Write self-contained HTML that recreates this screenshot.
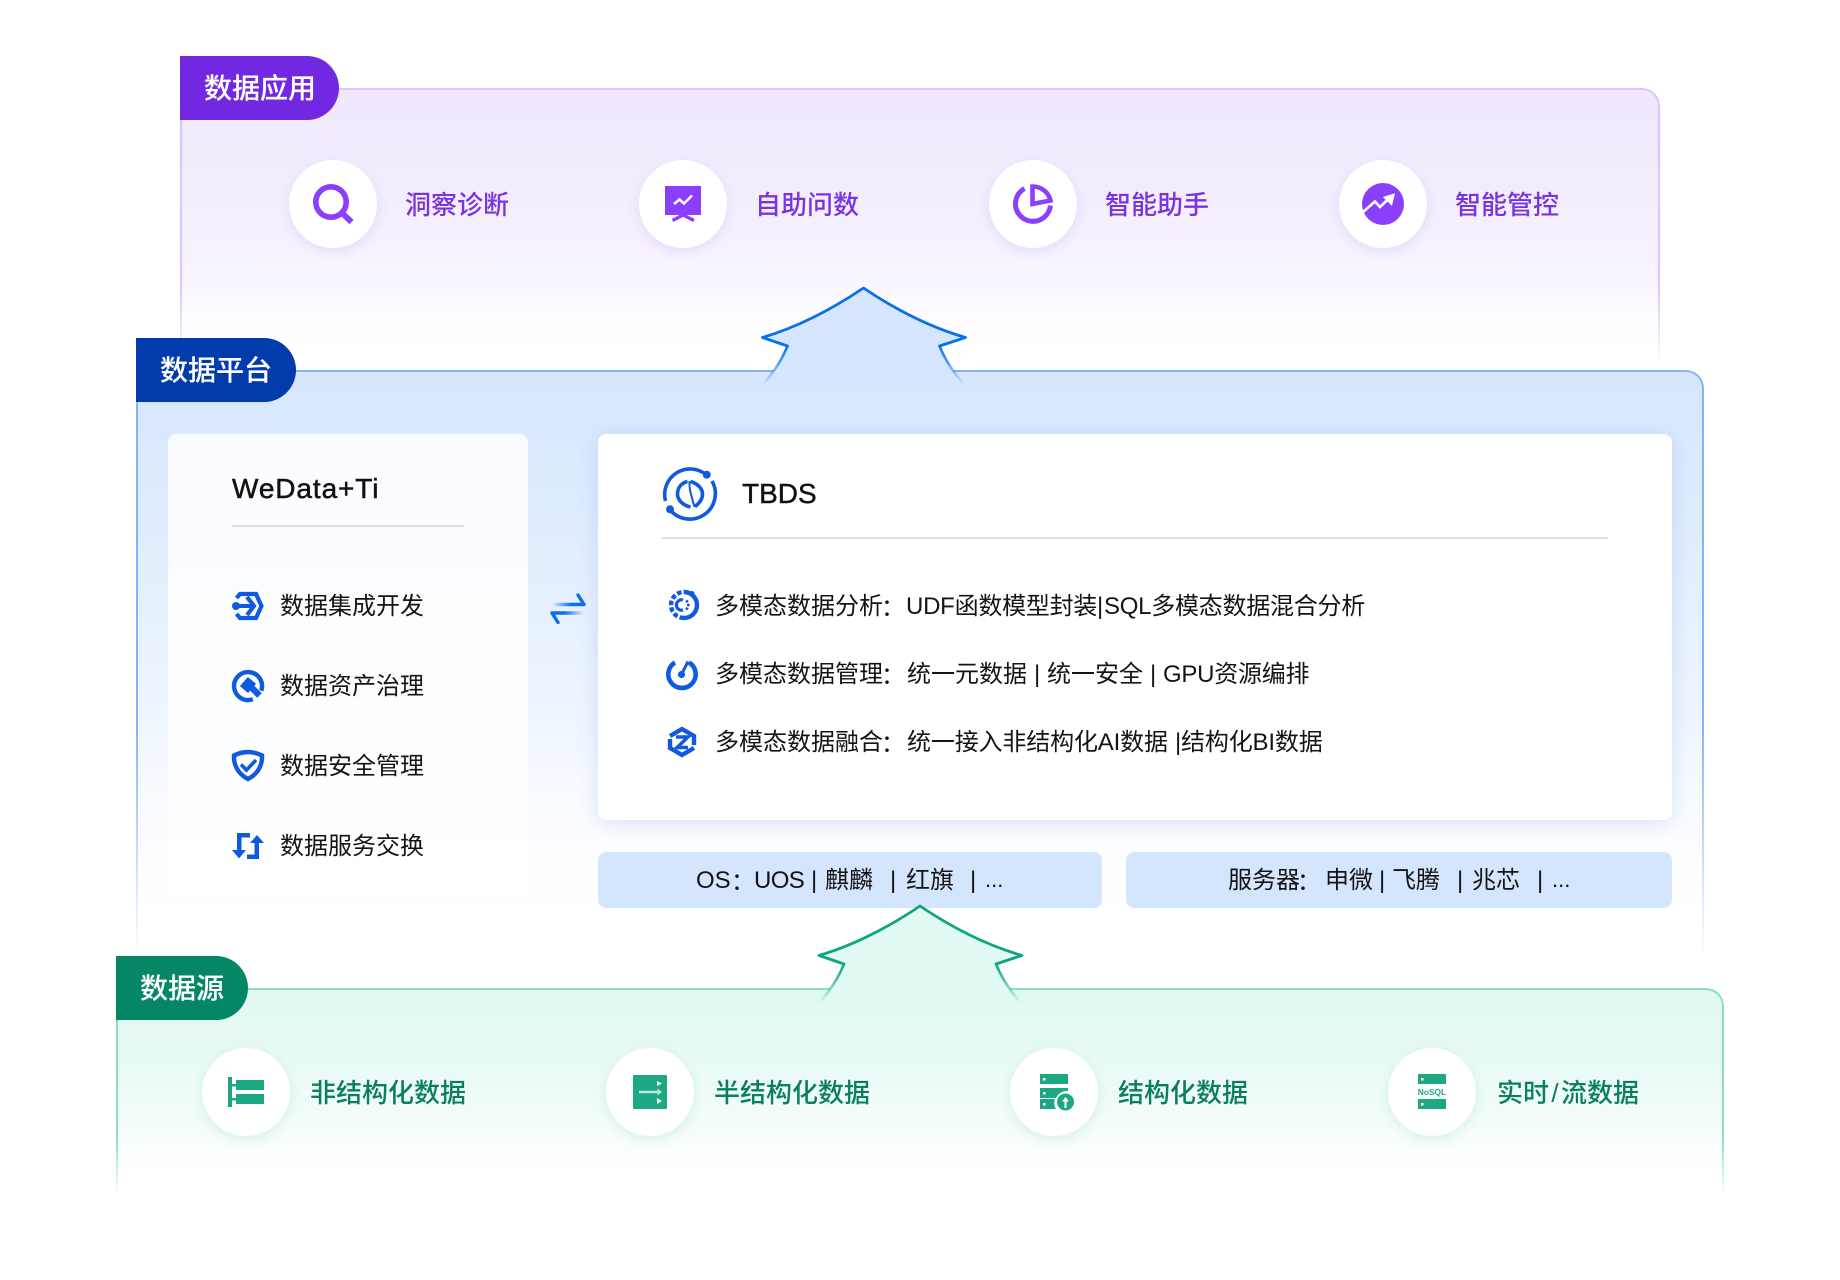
<!DOCTYPE html>
<html lang="zh-CN"><head><meta charset="utf-8"><title>数据架构</title>
<style>
html,body{margin:0;padding:0;background:#fff}
body{position:relative;width:1840px;height:1280px;overflow:hidden;font-family:"Liberation Sans","Noto Sans CJK SC",sans-serif;color:#141414}
.p{position:absolute;box-sizing:border-box;border-radius:18px 18px 0 0;border-style:solid;border-width:2px 2px 0 2px}
#pp{left:180px;top:88px;width:1480px;height:280px;border-color:#dcc3fc;background:linear-gradient(#f0e7fc,#f4eefd 45%,#fff);-webkit-mask-image:linear-gradient(#000 70%,transparent);mask-image:linear-gradient(#000 70%,transparent)}
#pb{left:136px;top:370px;width:1568px;height:590px;border-color:#80b5fb;background:linear-gradient(#d5e6fe,#fff 97%);-webkit-mask-image:linear-gradient(#000 60%,transparent);mask-image:linear-gradient(#000 60%,transparent)}
#pg{left:116px;top:988px;width:1608px;height:210px;border-color:#87e0c6;background:linear-gradient(#e0f9f2,#e6f9f4 30%,#fff 92%);-webkit-mask-image:linear-gradient(#000 70%,transparent);mask-image:linear-gradient(#000 70%,transparent)}
.tab{position:absolute;height:64px;border-radius:0 32px 32px 0;color:#fff;font-size:28px;font-weight:500;line-height:66px;box-sizing:border-box;white-space:nowrap;-webkit-text-stroke:.1px #fff}
.c{position:absolute;width:88px;height:88px;border-radius:50%;background:#fff}
.cp{top:160px;box-shadow:0 4px 12px rgba(130,70,240,.12)}
.cg{top:1048px;box-shadow:0 4px 12px rgba(20,160,120,.12)}
.t{position:absolute;white-space:nowrap;line-height:1}
.pt{font-size:26px;font-weight:500;color:#7a33e2;top:192px}
.gt{font-size:26px;font-weight:500;color:#0a7f5f;top:1080px}
.lt{font-size:24px;left:280px}
.r{font-size:24px}
.colon{font-family:"Noto Sans CJK TC",sans-serif}
#lc{position:absolute;left:168px;top:434px;width:360px;height:480px;border-radius:8px;background:linear-gradient(rgba(255,255,255,.85),rgba(255,255,255,.85) 92%,rgba(255,255,255,.3))}
#rc{position:absolute;left:598px;top:434px;width:1074px;height:386px;border-radius:8px;background:#fff;box-shadow:0 4px 20px rgba(40,100,220,.16)}
.bar{position:absolute;top:852px;height:56px;border-radius:8px;background:#d4e6fe}
.d{position:absolute;height:2px}
svg{position:absolute;left:0;top:0}
</style></head><body>
<div class="p" id="pp"></div>
<div class="p" id="pb"></div>
<div id="lc"></div>
<div id="rc"></div>
<div class="bar" style="left:598px;width:504px"></div>
<div class="bar" style="left:1126px;width:546px"></div>
<div class="p" id="pg"></div>

<div class="c cp" style="left:289px"></div>
<div class="c cp" style="left:639px"></div>
<div class="c cp" style="left:989px"></div>
<div class="c cp" style="left:1339px"></div>
<div class="c cg" style="left:202px"></div>
<div class="c cg" style="left:606px"></div>
<div class="c cg" style="left:1010px"></div>
<div class="c cg" style="left:1388px"></div>

<div class="d" style="left:232px;top:525px;width:232px;background:#dcdee4"></div>
<div class="d" style="left:662px;top:537px;width:946px;background:#dedfe0"></div>

<svg width="1840" height="1280" viewBox="0 0 1840 1280" fill="none">
<defs>
<linearGradient id="gb" gradientUnits="userSpaceOnUse" x1="0" y1="58" x2="0" y2="97"><stop offset="0" stop-color="#0a6fee"/><stop offset=".35" stop-color="#0a6fee" stop-opacity=".75"/><stop offset="1" stop-color="#0a6fee" stop-opacity="0"/></linearGradient>
<linearGradient id="gg" gradientUnits="userSpaceOnUse" x1="0" y1="58" x2="0" y2="97"><stop offset="0" stop-color="#0ea67f"/><stop offset=".35" stop-color="#0ea67f" stop-opacity=".75"/><stop offset="1" stop-color="#0ea67f" stop-opacity="0"/></linearGradient>
<linearGradient id="ex1" x1="0" x2="1" y1="0" y2="0"><stop offset="0" stop-color="#0a6fee" stop-opacity="0"/><stop offset=".6" stop-color="#0a6fee"/></linearGradient>
<linearGradient id="ex2" x1="1" x2="0" y1="0" y2="0"><stop offset="0" stop-color="#0a6fee" stop-opacity="0"/><stop offset=".6" stop-color="#0a6fee"/></linearGradient>
</defs>

<!-- blue arrow -->
<g transform="translate(863.5,288)">
<path d="M0 0Q-52 35-102 50L-76 58Q-84 78-101 97H101Q84 78 76 58L102 50Q52 35 0 0Z" fill="#d5e6fe"/>
<path d="M-76 58L-101 49.5Q-52 35 0 0Q52 35 102 49.5L76 58" stroke="#0a6fee" stroke-width="2.8" stroke-linejoin="round" stroke-linecap="round"/>
<path d="M-76 58Q-84 78-101 97" stroke="url(#gb)" stroke-width="2.6"/>
<path d="M76 58Q84 78 101 97" stroke="url(#gb)" stroke-width="2.6"/>
</g>
<!-- green arrow -->
<g transform="translate(920,906)">
<path d="M0 0Q-52 35-102 50L-76 58Q-84 78-101 97H101Q84 78 76 58L102 50Q52 35 0 0Z" fill="#e0f9f2"/>
<path d="M-76 58L-101 49.5Q-52 35 0 0Q52 35 102 49.5L76 58" stroke="#0ea67f" stroke-width="2.8" stroke-linejoin="round" stroke-linecap="round"/>
<path d="M-76 58Q-84 78-101 97" stroke="url(#gg)" stroke-width="2.6"/>
<path d="M76 58Q84 78 101 97" stroke="url(#gg)" stroke-width="2.6"/>
</g>

<!-- purple icons -->
<g stroke="#8b3ffc">
<circle cx="331" cy="202" r="15.2" stroke-width="5.6"/>
<path d="M342 213L351.5 222" stroke-width="6"/>
</g>
<rect x="665" y="186" width="36" height="29" fill="#8b3ffc"/>
<path d="M672.5 220.5L683 215L694 220.5" stroke="#8b3ffc" stroke-width="3.4"/>
<path d="M674 204L679.5 199.5L684 203.5L692 195.5" stroke="#fff" stroke-width="2.6"/>
<path d="M1024.5 188.5A17.5 17.5 0 1 0 1050.4 205.5" stroke="#8b3ffc" stroke-width="5"/>
<path d="M1032.5 186.5V204L1050.5 200.5A18 18 0 0 0 1032.5 186.5Z" stroke="#8b3ffc" stroke-width="4.6"/>
<circle cx="1383" cy="204" r="21" fill="#8b3ffc"/>
<path d="M1363 212L1375 201.5L1380 207L1390.5 197" stroke="#fff" stroke-width="2.6"/>
<path d="M1382.7 197L1395 193.3L1392 205.7Z" fill="#fff"/>

<!-- left blue icons -->
<path d="M236.5 598L240 594H256L261.5 606L256 618H240L236.5 614" stroke="#0f5ae0" stroke-width="4.2"/>
<path d="M247 597L254 606L247 615" stroke="#0f5ae0" stroke-width="4.2"/>
<path d="M236 606H252" stroke="#0f5ae0" stroke-width="4"/>
<circle cx="236" cy="606" r="4" fill="#0f5ae0"/>

<path d="M252.8 699.2A14 14 0 1 1 261.2 690.8" stroke="#0f5ae0" stroke-width="4.4"/>
<path d="M241 686L248 678L255 684L248 692Z" fill="#0f5ae0" stroke="#0f5ae0" stroke-width="1.5"/>
<path d="M250 686L259.5 695.5" stroke="#0f5ae0" stroke-width="6.4"/>

<path d="M248 752C243 752 238 753.5 234 755.5C233.5 765 238 774 248 779C258 774 262.5 765 262 755.5C258 753.5 253 752 248 752Z" stroke="#0f5ae0" stroke-width="4.4"/>
<path d="M241 764.5L246.5 770L256 760" stroke="#0f5ae0" stroke-width="3.6"/>
<g fill="#0f5ae0">
<path d="M237 833H250V837.5H241.5V850H246L239 858.5L232 850H237Z"/>
<path d="M247 854.5H254.5V843H250L257 835L264 843H259V859H247Z"/>
</g>

<!-- exchange -->
<path d="M552 604.5H584L578 595" stroke="url(#ex1)" stroke-width="3.4" stroke-linecap="round" stroke-linejoin="round"/>
<path d="M584 613H552L558 622.5" stroke="url(#ex2)" stroke-width="3.4" stroke-linecap="round" stroke-linejoin="round"/>

<!-- TBDS icon -->
<g stroke="#0f5ae0" stroke-width="3.6">
<path d="M706 474.5A25.500 25.500 0 0 0 665.500 501"/>
<path d="M669.5 509A25.500 25.500 0 0 0 712 481"/>
<path d="M687.500 481.500C681 483 677.500 488 677.500 494C677.500 500 683 505.500 690.500 507"/>
<path d="M690.500 481.500C698.500 484 702.500 489 702.500 494C702.500 499 699 503.500 695 506.500"/>
</g>
<path d="M689.500 481C689 488 691 495 694.500 507" stroke="#0f5ae0" stroke-width="2"/>
<circle cx="706.7" cy="474.7" r="4" fill="#0f5ae0"/>
<circle cx="670" cy="509.3" r="4" fill="#0f5ae0"/>

<!-- row icons -->
<g stroke="#0f5ae0">
<path d="M684 592A13 13 0 0 1 684 618" stroke-width="4.4"/>
<path d="M684 618A13 13 0 0 1 684 592" stroke-width="4.4" stroke-dasharray="4.500 2.200"/>
<circle cx="692" cy="593.5" r="2.5" fill="#0f5ae0" stroke="none"/>
<path d="M683 600A5.200 5.200 0 1 0 683 610" stroke-width="3.2"/>
<path d="M686 600.5A5.500 5.500 0 0 1 686 609.5" stroke-width="2.6" stroke-dasharray="2.500 1.500"/>
<path d="M675 662.5A13.700 13.700 0 1 0 689 662.5" stroke-width="4.6"/>
<path d="M681.5 674.5L688 661.5" stroke-width="3"/>
<circle cx="681.5" cy="674.5" r="3.6" fill="#0f5ae0" stroke="none"/>
<path d="M694 745V736L682 729L670 736" stroke-width="4.4"/>
<path d="M670 739V748L682 755L694 748" stroke-width="4.4"/>
<path d="M676 737H688L677 747.5H688" stroke-width="3.4"/>
</g>

<!-- green icons -->
<g fill="#1ca883">
<rect x="228" y="1077" width="4" height="30"/>
<rect x="232" y="1084" width="5" height="2.5"/>
<rect x="232" y="1098" width="5" height="2.5"/>
<rect x="236" y="1080" width="28" height="10"/>
<rect x="236" y="1094" width="28" height="10"/>
<rect x="633" y="1075" width="34" height="34" rx="1"/>
<rect x="1040" y="1074" width="28" height="10"/>
<path d="M1040 1088H1068V1091A12 12 0 0 0 1056 1098H1040Z"/>
<path d="M1040 1099H1055A11 11 0 0 0 1056 1109H1040Z"/>
<circle cx="1065.5" cy="1102" r="8.5"/>
<rect x="1418" y="1074" width="28" height="10"/>
<rect x="1418" y="1099" width="28" height="10"/>
</g>
<path d="M657 1081L662 1083.5L657 1086ZM657 1098L662 1101L657 1104Z" fill="#fff"/>
<path d="M639 1092H658" stroke="#bde8da" stroke-width="2.4"/>
<path d="M657.5 1088.5L662 1092L657.5 1095.5Z" fill="#bde8da"/>
<g fill="#fff">
<rect x="1043" y="1078" width="2.5" height="2.5"/><rect x="1043" y="1092" width="2.5" height="2.5"/><rect x="1043" y="1103" width="2.5" height="2.5"/>
<rect x="1421" y="1078" width="2.5" height="2.5"/><rect x="1421" y="1103" width="2.5" height="2.5"/>
<path d="M1065.5 1097L1069 1101.5H1066.5V1108H1064.5V1101.5H1062Z"/>
</g>
<text x="1432" y="1095" text-anchor="middle" font-family="Liberation Sans" font-weight="700" font-size="8.4" fill="#1ca883">NoSQL</text>
</svg>

<div class="tab" style="left:180px;top:56px;width:159px;padding-left:24px;background:#7228e0">数据应用</div>
<div class="tab" style="left:136px;top:338px;width:160px;padding-left:24px;background:#023bab">数据平台</div>
<div class="tab" style="left:116px;top:956px;width:132px;padding-left:24px;background:#058766">数据源</div>

<div class="t pt" style="left:405px">洞察诊断</div>
<div class="t pt" style="left:755px">自助问数</div>
<div class="t pt" style="left:1105px">智能助手</div>
<div class="t pt" style="left:1455px">智能管控</div>

<div class="t gt" style="left:310px">非结构化数据</div>
<div class="t gt" style="left:714px">半结构化数据</div>
<div class="t gt" style="left:1118px">结构化数据</div>
<div class="t gt" style="left:1497px">实时<span style="margin:0 2.4px">/</span>流数据</div>

<div class="t" style="left:232px;top:475px;font-size:28px;letter-spacing:.9px;-webkit-text-stroke:.5px #111;color:#111">WeData+Ti</div>
<div class="t lt" style="top:595px">数据集成开发</div>
<div class="t lt" style="top:675px">数据资产治理</div>
<div class="t lt" style="top:755px">数据安全管理</div>
<div class="t lt" style="top:835px">数据服务交换</div>

<div class="t" style="left:742px;top:480px;font-size:28px;color:#111;-webkit-text-stroke:.4px #111">TBDS</div>

<div class="t r" style="left:715px;top:595px">多模态数据分析</div>
<div class="t r colon" style="left:875px;top:595px">：</div>
<div class="t r" style="left:906px;top:595px;letter-spacing:-.25px">UDF函数模型封装</div>
<div class="t r" style="left:1097px;top:595px">|</div>
<div class="t r" style="left:1104px;top:595px;letter-spacing:-.25px">SQL多模态数据混合分析</div>

<div class="t r" style="left:715px;top:663px">多模态数据管理</div>
<div class="t r colon" style="left:875px;top:663px">：</div>
<div class="t r" style="left:907px;top:663px">统一元数据</div>
<div class="t r" style="left:1034px;top:663px">|</div>
<div class="t r" style="left:1047px;top:663px">统一安全</div>
<div class="t r" style="left:1150px;top:663px">|</div>
<div class="t r" style="left:1163px;top:663px;letter-spacing:-.25px">GPU资源编排</div>

<div class="t r" style="left:715px;top:731px">多模态数据融合</div>
<div class="t r colon" style="left:875px;top:731px">：</div>
<div class="t r" style="left:907px;top:731px;letter-spacing:-.15px">统一接入非结构化AI数据</div>
<div class="t r" style="left:1175px;top:731px">|</div>
<div class="t r" style="left:1181px;top:731px;letter-spacing:-.15px">结构化BI数据</div>

<div class="t r" style="left:696px;top:869px">OS</div>
<div class="t r colon" style="left:725px;top:869px">：</div>
<div class="t r" style="left:754px;top:869px;letter-spacing:-.6px">UOS</div>
<div class="t r" style="left:811px;top:869px">|</div>
<div class="t r" style="left:825px;top:869px">麒麟</div>
<div class="t r" style="left:890px;top:869px">|</div>
<div class="t r" style="left:906px;top:869px">红旗</div>
<div class="t r" style="left:970px;top:869px">|</div>
<div class="t r" style="left:985px;top:869px;font-size:22px">...</div>

<div class="t r" style="left:1228px;top:869px">服务器</div>
<div class="t r colon" style="left:1291px;top:869px">：</div>
<div class="t r" style="left:1325px;top:869px">申微</div>
<div class="t r" style="left:1379px;top:869px">|</div>
<div class="t r" style="left:1392px;top:869px">飞腾</div>
<div class="t r" style="left:1457px;top:869px">|</div>
<div class="t r" style="left:1472px;top:869px">兆芯</div>
<div class="t r" style="left:1537px;top:869px">|</div>
<div class="t r" style="left:1552px;top:869px;font-size:22px">...</div>
</body></html>
